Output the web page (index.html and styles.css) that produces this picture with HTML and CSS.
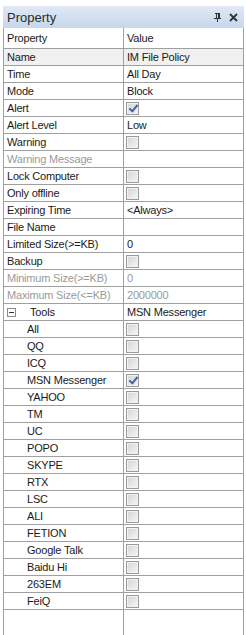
FILE: index.html
```html
<!DOCTYPE html>
<html>
<head>
<meta charset="utf-8">
<link rel="stylesheet" href="styles.css">
</head>
<body>
<div class="panel">
  <div class="titlebar">
    <span class="title">Property</span>
    <span class="tools">
      <svg class="pin" width="9" height="10" viewBox="0 0 9 10"><path d="M2 1h5M3 1v5M6 1v5M5 1v5M1 6h7M4.5 6v4" stroke="#333" stroke-width="1" fill="none" shape-rendering="crispEdges"/></svg>
      <svg class="close" width="9" height="9" viewBox="0 0 9 9"><path d="M1 1L8 8M8 1L1 8" stroke="#333" stroke-width="1.8" fill="none"/></svg>
    </span>
  </div>
  <div class="grid">
    <div class="row head"><div class="k">Property</div><div class="v">Value</div></div>
    <div class="row sel"><div class="k">Name</div><div class="v">IM File Policy</div></div>
    <div class="row"><div class="k">Time</div><div class="v">All Day</div></div>
    <div class="row"><div class="k">Mode</div><div class="v">Block</div></div>
    <div class="row"><div class="k">Alert</div><div class="v"><span class="cb on"></span></div></div>
    <div class="row"><div class="k">Alert Level</div><div class="v">Low</div></div>
    <div class="row"><div class="k">Warning</div><div class="v"><span class="cb"></span></div></div>
    <div class="row dis"><div class="k">Warning Message</div><div class="v"></div></div>
    <div class="row"><div class="k">Lock Computer</div><div class="v"><span class="cb"></span></div></div>
    <div class="row"><div class="k">Only offline</div><div class="v"><span class="cb"></span></div></div>
    <div class="row"><div class="k">Expiring Time</div><div class="v">&lt;Always&gt;</div></div>
    <div class="row"><div class="k">File Name</div><div class="v"></div></div>
    <div class="row"><div class="k">Limited Size(&gt;=KB)</div><div class="v">0</div></div>
    <div class="row"><div class="k">Backup</div><div class="v"><span class="cb"></span></div></div>
    <div class="row dis"><div class="k">Minimum Size(&gt;=KB)</div><div class="v">0</div></div>
    <div class="row dis"><div class="k">Maximum Size(&lt;=KB)</div><div class="v">2000000</div></div>
    <div class="row"><div class="k group"><span class="exp"></span>Tools</div><div class="v">MSN Messenger</div></div>
    <div class="row"><div class="k sub">All</div><div class="v"><span class="cb"></span></div></div>
    <div class="row"><div class="k sub">QQ</div><div class="v"><span class="cb"></span></div></div>
    <div class="row"><div class="k sub">ICQ</div><div class="v"><span class="cb"></span></div></div>
    <div class="row"><div class="k sub">MSN Messenger</div><div class="v"><span class="cb on"></span></div></div>
    <div class="row"><div class="k sub">YAHOO</div><div class="v"><span class="cb"></span></div></div>
    <div class="row"><div class="k sub">TM</div><div class="v"><span class="cb"></span></div></div>
    <div class="row"><div class="k sub">UC</div><div class="v"><span class="cb"></span></div></div>
    <div class="row"><div class="k sub">POPO</div><div class="v"><span class="cb"></span></div></div>
    <div class="row"><div class="k sub">SKYPE</div><div class="v"><span class="cb"></span></div></div>
    <div class="row"><div class="k sub">RTX</div><div class="v"><span class="cb"></span></div></div>
    <div class="row"><div class="k sub">LSC</div><div class="v"><span class="cb"></span></div></div>
    <div class="row"><div class="k sub">ALI</div><div class="v"><span class="cb"></span></div></div>
    <div class="row"><div class="k sub">FETION</div><div class="v"><span class="cb"></span></div></div>
    <div class="row"><div class="k sub">Google Talk</div><div class="v"><span class="cb"></span></div></div>
    <div class="row"><div class="k sub">Baidu Hi</div><div class="v"><span class="cb"></span></div></div>
    <div class="row"><div class="k sub">263EM</div><div class="v"><span class="cb"></span></div></div>
    <div class="row"><div class="k sub">FeiQ</div><div class="v"><span class="cb"></span></div></div>
    <div class="row filler"><div class="k"></div><div class="v"></div></div>
  </div>
</div>
</body>
</html>
```

FILE: styles.css
```css
html, body {
  margin: 0;
  padding: 0;
  background: #fff;
}
body {
  font-family: "Liberation Sans", Arial, sans-serif;
  font-size: 11px;
  letter-spacing: -0.2px;
  color: #1a1a1a;
}
.panel {
  width: 241px;
  margin: 6px 0 0 3px;
}
.titlebar {
  height: 22px;
  display: flex;
  align-items: center;
  justify-content: space-between;
  background: linear-gradient(#e0e9f5, #c6d7ec);
  padding: 0 6px 0 4px;
}
.title {
  font-size: 13px;
  letter-spacing: 0;
  color: #2b2b2b;
}
.tools {
  display: flex;
  align-items: center;
  gap: 7px;
}
.grid {
  border-left: 1px solid #a0a0a0;
  border-right: 1px solid #a0a0a0;
}
.row {
  display: grid;
  grid-template-columns: 120px 118px;
  height: 16px;
  border-bottom: 1px solid #a0a0a0;
  line-height: 16px;
}
.row.head {
  height: 20px;
  line-height: 20px;
}
.row.sel {
  background: #f0f0f0;
}
.k {
  border-right: 1px solid #a0a0a0;
  padding-left: 3px;
  white-space: nowrap;
  overflow: hidden;
}
.v {
  padding-left: 3px;
  display: flex;
  align-items: center;
  white-space: nowrap;
}
.dis .k, .dis .v {
  color: #9a9a9a;
}
.sub {
  padding-left: 23px;
}
.group {
  display: flex;
  align-items: center;
}
.exp {
  width: 7px;
  height: 7px;
  border: 1px solid #8a8a8a;
  margin: 0 14px 0 0;
  position: relative;
  background: #fff;
}
.exp::after {
  content: "";
  position: absolute;
  left: 1px;
  top: 3px;
  width: 5px;
  height: 1px;
  background: #333;
}
.cb {
  width: 11px;
  height: 11px;
  border: 1px solid #9a9a9a;
  background: linear-gradient(135deg, #d4d4d4, #f6f6f6);
  box-shadow: inset 0 0 0 1px #f2f2f2;
  margin-left: -1px;
  position: relative;
}
.cb.on::after {
  content: "";
  position: absolute;
  left: 4px;
  top: 0px;
  width: 3px;
  height: 7px;
  border-right: 2px solid #4463b0;
  border-bottom: 2px solid #4463b0;
  transform: rotate(40deg);
}
.row.filler {
  height: 40px;
  border-bottom: none;
}
```
